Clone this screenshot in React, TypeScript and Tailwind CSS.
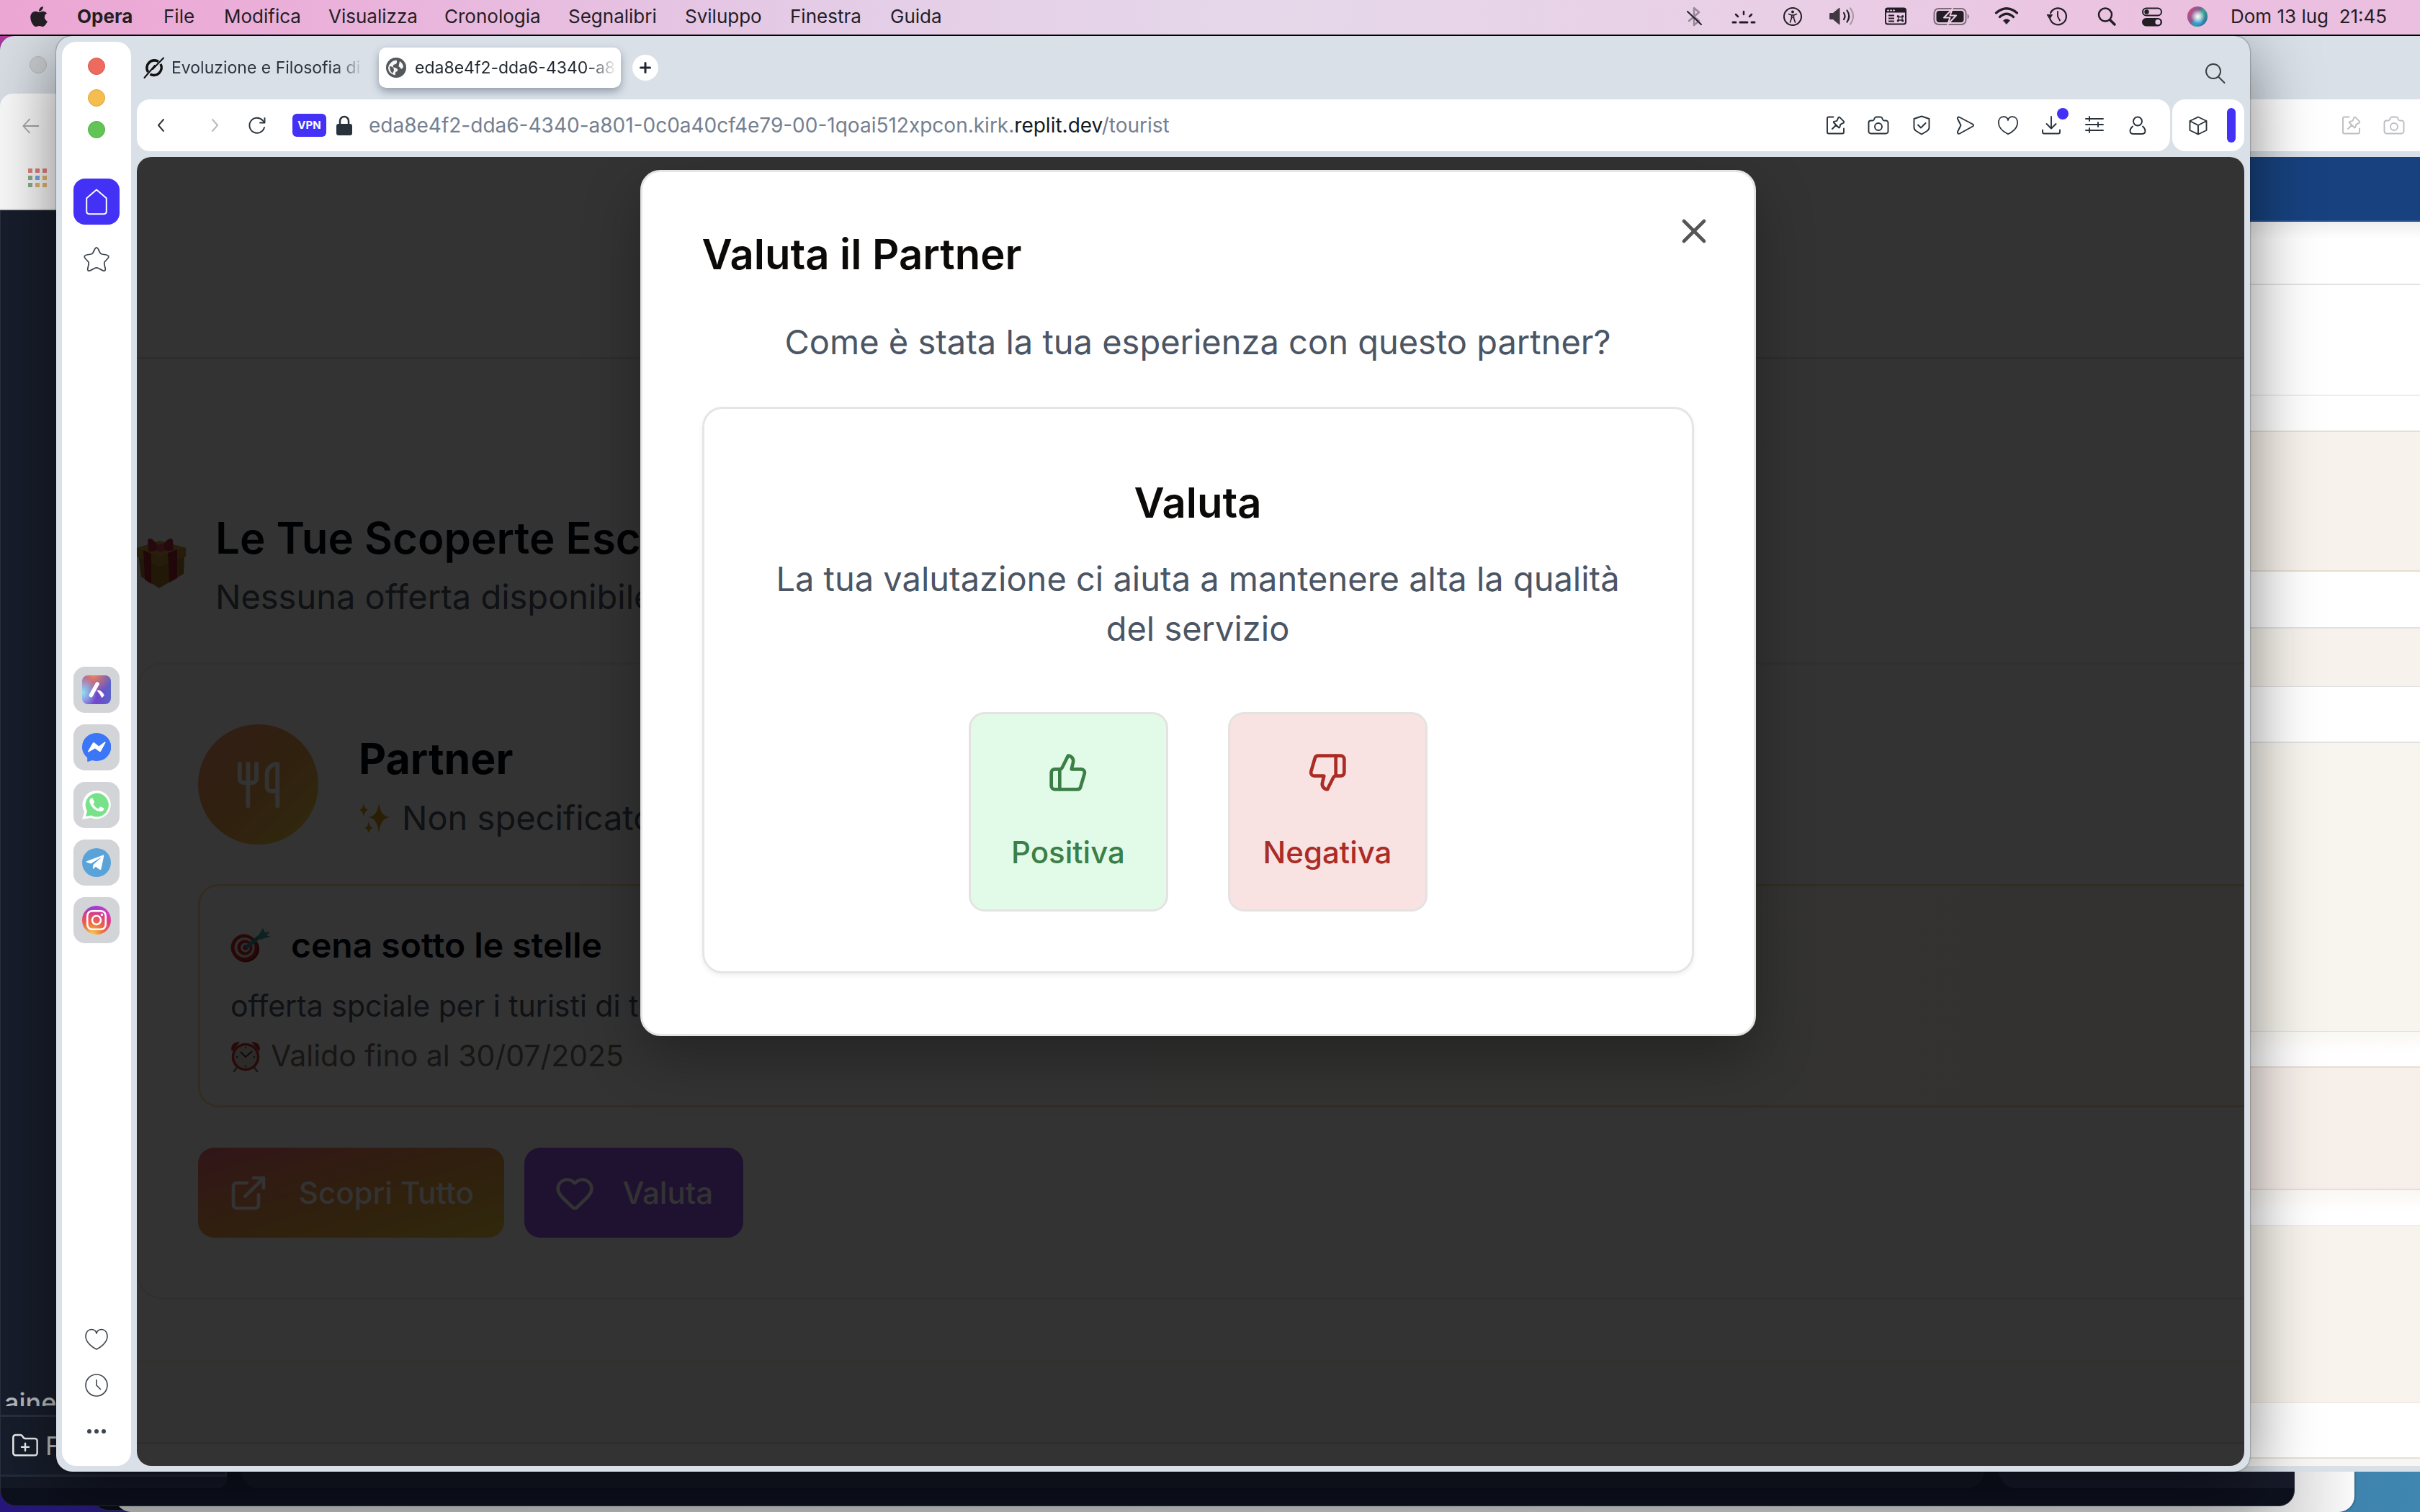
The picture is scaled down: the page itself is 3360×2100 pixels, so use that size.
import type { ReactNode } from "react";
import {
  ExternalLink,
  FolderPlus,
  Heart,
  ThumbsDown,
  ThumbsUp,
  Utensils,
  X,
} from "lucide-react";
import { FaApple, FaInstagram, FaTelegramPlane } from "react-icons/fa";

/* ---------- Menu bar ---------- */

function MenuIcon({ label, width, children }: { label: string; width: number; children: ReactNode }) {
  return (
    <button aria-label={label} className="flex shrink-0 items-center justify-center">
      <svg width={width} height="32" viewBox={`0 0 ${width} 32`} fill="none" stroke="currentColor" strokeLinecap="round" strokeLinejoin="round">
        {children}
      </svg>
    </button>
  );
}

function StatusIcons() {
  return (
    <div className="grid grid-cols-[66px_69px_68px_70px_77px_79px_73px_70px_65px_62px] justify-items-center text-[#231d24]">
      <MenuIcon label="Bluetooth" width={32}>
        <path d="M8 22 22 10 15 4v24l7-6-6-5" strokeWidth="2.5" opacity="0.4" />
        <path d="M6 9l19 18" strokeWidth="2" />
      </MenuIcon>
      <MenuIcon label="Retroilluminazione tastiera" width={36}>
        <path d="M3 24h4M13 24h10M29 24h4" strokeWidth="3" />
        <path d="M18 9v4M7 13l3 3M29 13l-3 3" strokeWidth="2.5" />
      </MenuIcon>
      <MenuIcon label="Accessibilità" width={32}>
        <circle cx="16" cy="16" r="12" strokeWidth="2" />
        <circle cx="16" cy="9.500" r="2" fill="currentColor" stroke="none" />
        <path d="M10.500 12.500 14.500 14v4l-2 6M21.500 12.500 17.500 14v4l2 6M14.500 14h3M14.500 17h3" strokeWidth="1.6" />
      </MenuIcon>
      <MenuIcon label="Volume" width={38}>
        <path d="M2 11.500h4l9-7.500v23l-9-7.500H2z" fill="currentColor" strokeWidth="1" opacity="0.85" />
        <path d="M21 11q3 4.500 0 9" strokeWidth="2.200" />
        <path d="M25.500 7.500q5.500 8 0 16" strokeWidth="2.200" />
        <path d="M30 4.500q8 11 0 22" strokeWidth="2.200" opacity="0.3" />
      </MenuIcon>
      <MenuIcon label="Comandi rapidi" width={32}>
        <rect x="2" y="4.500" width="28" height="22" rx="3" strokeWidth="2" />
        <rect x="2" y="4.500" width="28" height="6" fill="currentColor" stroke="none" />
        <path d="M5 7.500h1M9 7.500h1M13 7.500h1" stroke="#e9cde5" strokeWidth="2" />
        <path d="M6 14.500h8M6 18.500h8M6 22.500h8" strokeWidth="2" strokeLinecap="butt" />
        <path d="M20 16.500h5v4.500h-5zM20 16.500h-1.500V15H20zM25 16.500V15h1.500v1.500zM20 21v1.500h-1.500V21zM25 21h1.500v1.500H25z" strokeWidth="1.3" />
      </MenuIcon>
      <MenuIcon label="Batteria in carica" width={54}>
        <rect x="2.500" y="5" width="44" height="22" rx="6" strokeWidth="2" opacity="0.55" />
        <path d="M49 13v6q3-3 0-6z" fill="currentColor" strokeWidth="0.5" opacity="0.55" />
        <rect x="5.500" y="8" width="38" height="16" rx="4" fill="currentColor" stroke="none" />
        <path d="M28 5 16 17.500h8.500L21 27l12-12.500h-8.500z" fill="currentColor" stroke="#ecd0e6" strokeWidth="2" />
      </MenuIcon>
      <MenuIcon label="Wi-Fi" width={34}>
        <path d="M2.500 11q14.500-12.500 29 0" strokeWidth="3.200" />
        <path d="M7.500 16.500q9.500-8.500 19 0" strokeWidth="3.200" />
        <path d="M12.500 21.500q4.500-4 9 0L17 26.500z" fill="currentColor" strokeWidth="0.5" />
      </MenuIcon>
      <MenuIcon label="Time Machine" width={32}>
        <path d="M5.500 19.500A11.500 11.500 0 1 0 6 11" strokeWidth="2.200" />
        <path d="M1.500 13.500h7L5 19z" fill="currentColor" strokeWidth="1" />
        <path d="M16 9v7l3 5.500" strokeWidth="1.800" />
      </MenuIcon>
      <MenuIcon label="Spotlight" width={32}>
        <circle cx="14" cy="13.500" r="9" strokeWidth="2.500" />
        <path d="M20.500 20.500 27 27" strokeWidth="3.500" />
      </MenuIcon>
      <MenuIcon label="Centro di Controllo" width={32}>
        <rect x="3" y="4.500" width="26" height="10" rx="5" strokeWidth="2" />
        <circle cx="8.500" cy="9.500" r="3.200" fill="currentColor" stroke="none" />
        <rect x="2" y="18" width="28" height="11.500" rx="5.700" fill="currentColor" stroke="none" />
        <circle cx="24" cy="23.700" r="3.600" fill="#ebc9e3" stroke="none" />
      </MenuIcon>
    </div>
  );
}

function SiriIcon() {
  return (
    <svg width="28" height="28" viewBox="0 0 28 28" aria-label="Siri">
      <defs>
        <radialGradient id="siriCore" cx="0.5" cy="0.5" r="0.5">
          <stop offset="0" stopColor="#ffffff" />
          <stop offset="0.45" stopColor="#ffffff" stopOpacity="0.6" />
          <stop offset="1" stopColor="#ffffff" stopOpacity="0" />
        </radialGradient>
        <linearGradient id="siriRim" x1="0" y1="0.2" x2="1" y2="0.8">
          <stop offset="0" stopColor="#d6457f" />
          <stop offset="0.4" stopColor="#7f5f93" />
          <stop offset="0.6" stopColor="#38a58c" />
          <stop offset="1" stopColor="#3463a8" />
        </linearGradient>
      </defs>
      <circle cx="14" cy="14" r="14" fill="url(#siriRim)" />
      <path d="M6 23q8 6 16-1l-8-6z" fill="#2f9bd6" />
      <circle cx="14.500" cy="14" r="10" fill="url(#siriCore)" />
    </svg>
  );
}

const menus = ["File", "Modifica", "Visualizza", "Cronologia", "Segnalibri", "Sviluppo", "Finestra", "Guida"];

function MenuBar() {
  return (
    <header className="z-10 flex h-[50px] shrink-0 items-center justify-between border-b-2 border-black bg-[linear-gradient(to_right,#eca6d3,#eab2db_15%,#e4cbe6_33%,#e6d8ea_52%,#e9cfe6_74%,#ebbfdf_92%)] px-[38px] pb-0.5 text-[26px] leading-8 text-[#231d24]">
      <nav className="grid grid-cols-[69px_120px_84px_145px_161px_172px_162px_146px_139px_80px] items-center text-left whitespace-nowrap">
        <button aria-label="Apple"><FaApple className="size-8" /></button>
        <button className="text-left font-bold">Opera</button>
        {menus.map((m) => (
          <button key={m} className="text-left">{m}</button>
        ))}
      </nav>
      <div className="flex items-center whitespace-nowrap">
        <StatusIcons />
        <div className="flex items-center gap-8 pl-[18px]">
          <SiriIcon />
          <span className="w-[225px]">Dom 13 lug&nbsp; 21:45</span>
        </div>
      </div>
    </header>
  );
}

/* ---------- Browser line icons, 32px grid ---------- */

const glyphs = {
  back: <path d="M19 8l-7 8 7 8" />,
  forward: <path d="M13 8l7 8-7 8" />,
  reload: (
    <>
      <path d="M26 19A10.500 10.500 0 1 1 23.500 9l2.500 3" />
      <path d="M26.500 6v6.500H20" />
    </>
  ),
  pin: (
    <>
      <path d="M13.500 4.500H7a2 2 0 0 0-2 2v19a2 2 0 0 0 2 2h19a2 2 0 0 0 2-2v-5" />
      <path d="M22.500 5.200 28 10.700q.8 1-.4 2l-4.300 2.100-1 4q-.6 1.200-1.600.2l-6.500-6.500q-1-1 .2-1.600l4-1 2-4.500q1-1.200 2.100-.2zM17 16l-5 5" />
    </>
  ),
  camera: (
    <>
      <path d="M2.500 12.500a3 3 0 0 1 3-3h2.500q1.500 0 2-1.500l.6-1.600Q11.300 4.500 13 4.500h6q1.700 0 2.400 1.900L22 8q.5 1.500 2 1.500h2.500a3 3 0 0 1 3 3v12a3 3 0 0 1-3 3h-21a3 3 0 0 1-3-3z" />
      <circle cx="16" cy="18" r="5" />
    </>
  ),
  shield: (
    <>
      <path d="M16 3.500 26.500 7v12q0 3-3 5L16 28.500 8.500 24q-3-2-3-5V7z" />
      <path d="M11 15.500l4 4 6.500-6.500" />
    </>
  ),
  send: <path d="M6 5.500q1-1.500 3-.5l18 9.500q2 1.500 0 3L9 27.500q-2 1-3-1-.3-.7 0-1.500l4.500-9L6 7q-.5-.8 0-1.500z" />,
  heart: <path d="M16 30C12 28 1 21.500 1 12 1 6 4.500 2.500 9 2.500c3.800 0 6.300 2 7 5.500.7-3.500 3.200-5.500 7-5.500 4.500 0 8 3.500 8 9.500C31 21.500 20 28 16 30z" />,
  download: (
    <>
      <path d="M16 4v16M9.500 14l6.500 6.500 6.500-6.500" />
      <path d="M4 22.500v3a2 2 0 0 0 2 2h20a2 2 0 0 0 2-2v-3" />
    </>
  ),
  sliders: <path d="M4 7h24M4 15h24M4 23h24M9 4v6M21 12v6M9 20v6" />,
  person: (
    <>
      <circle cx="16" cy="10.500" r="6" />
      <path d="M9 17.500q-3.500 3-3.500 6.500 0 4 5 4h11q5 0 5-4 0-3.500-3.500-6.500" />
    </>
  ),
  cube: <path d="M16 4.500 27.500 10v13L16 28.500 4.500 23V10zM4.500 10 16 16l11.500-6M16 16v12.500" />,
  search: (
    <>
      <circle cx="13" cy="13" r="10" />
      <path d="M20 20.500 28.500 29" />
    </>
  ),
  home: <path d="M6 12.500 16 4l10 8.500V26q0 2.500-2.500 2.500h-15Q6 28.500 6 26z" />,
  star: <path d="M16 3q1.200 0 2 2l2 4q.6 1 2 1.400l5 .8q4 1 1.500 4L25 19q-.8 1 0 4l.8 3.500q.5 3.500-3 2L18 26q-2-1-4 0l-4.800 2.500q-3.500 1.500-3-2L7 23q.8-3 0-4l-3.500-3.800q-2.500-3 1.500-4l5-.8q1.400-.4 2-1.400l2-4q.8-2 2-2z" />,
  clock: (
    <>
      <circle cx="16" cy="16" r="15" />
      <path d="M16 8.500V16l5.500 5.500" />
    </>
  ),
  arrowLeft: <path d="M27 16H5M14 6 4.500 16 14 26" />,
};

function Glyph({ name, className }: { name: keyof typeof glyphs; className?: string }) {
  return (
    <svg viewBox="0 0 32 32" fill="none" stroke="currentColor" strokeWidth="1.900" strokeLinecap="round" strokeLinejoin="round" className={className ?? "size-8"}>
      {glyphs[name]}
    </svg>
  );
}

function GlyphButton({ name, label, className, icon }: { name: keyof typeof glyphs; label: string; className?: string; icon?: string }) {
  return (
    <button aria-label={label} className={className}>
      <Glyph name={name} className={icon} />
    </button>
  );
}

/* ---------- Opera sidebar ---------- */

function AppTile({ label, children }: { label: string; children: ReactNode }) {
  return (
    <button aria-label={label} className="flex size-16 items-center justify-center rounded-2xl bg-[#d3d4d8] text-white">
      {children}
    </button>
  );
}

function Sidebar() {
  return (
    <aside className="flex w-24 shrink-0 flex-col items-center rounded-[20px] bg-white text-[#3d454d]">
      <div className="flex flex-col gap-5 pt-[22px]">
        <button aria-label="Chiudi" className="size-6 rounded-full border border-[#d9584d] bg-[#ec6a5e]" />
        <button aria-label="Riduci" className="size-6 rounded-full border border-[#dba63f] bg-[#f4bd4f]" />
        <button aria-label="Ingrandisci" className="size-6 rounded-full border border-[#51ae45] bg-[#61c454]" />
      </div>
      <button aria-label="Home" className="mt-14 flex size-16 items-center justify-center rounded-2xl bg-[#4331f5] text-white">
        <Glyph name="home" className="size-11 stroke-[1.4]" />
      </button>
      <button aria-label="Preferiti" className="mt-7">
        <Glyph name="star" className="size-10 stroke-[1.4]" />
      </button>
      <div className="mt-[546px] flex flex-col gap-4">
        <AppTile label="Aria">
          <span className="flex size-10 items-center justify-center rounded-lg bg-[radial-gradient(circle_at_0%_60%,#8fe6ee,transparent_45%),radial-gradient(circle_at_40%_0%,#ec8456,transparent_55%),linear-gradient(to_right,#8f5fe0,#6f47cc_50%,#5a63c8)]">
            <svg viewBox="0 0 40 40" className="size-10" fill="none" stroke="white" strokeWidth="5.500" strokeLinecap="round">
              <path d="M21 12 12.500 27.500" />
              <path d="M21.500 20.500q7 1 9 7.500l-3 3q-3-6-6-9z" fill="white" strokeWidth="0.500" />
            </svg>
          </span>
        </AppTile>
        <AppTile label="Messenger">
          <svg viewBox="0 0 40 40" className="size-10">
            <path d="M20 0a20 19.500 0 1 1-6 38l-6 2q-.8 0-.8-1v-4.500A20 19.500 0 0 1 20 0z" fill="#3a76f6" />
            <path d="M8 25.500 15 13.500q1-1 2.200 0l6 5 8-6q1.500-.8 1.300 1L26 25.500q-1.200 1.200-2.500 0L18 21.500 9 26.500q-1.500.3-1-1z" fill="white" />
          </svg>
        </AppTile>
        <AppTile label="WhatsApp">
          <svg viewBox="0 0 40 40" className="size-10">
            <path d="M20.500 0A19.700 19.700 0 1 1 12 37.700L0 40l3.200-10.500A19.700 19.700 0 0 1 20.500 0z" fill="white" />
            <path d="M20.500 3.500a16.500 16.500 0 1 1-8 31L5 36l2-7.500A16.500 16.500 0 0 1 20.500 3.500z" fill="#78e28a" />
            <path d="M10.500 13q1.500-3.500 4-2.500l2.500 5q.3 1.300-1.500 3.500 2.500 4.500 7 6.500l2.500-2.700q.8-.6 1.800 0l3.700 2q-.5 4.500-5.500 4.200-11-1.500-14.500-12.500-.3-2 0-3.500z" fill="white" />
          </svg>
        </AppTile>
        <AppTile label="Telegram">
          <span className="flex size-10 items-center justify-center rounded-full bg-[#5aa3d9]">
            <FaTelegramPlane className="mr-1 size-7" />
          </span>
        </AppTile>
        <AppTile label="Instagram">
          <span className="flex size-10 items-center justify-center rounded-full bg-[radial-gradient(circle_at_35%_100%,#f8cf4d_0%,#f0703f_32%,#e0407a_60%,transparent_80%),linear-gradient(to_right,#6a3df0,#d63fc0)]">
            <FaInstagram className="size-8" />
          </span>
        </AppTile>
      </div>
      <div className="mt-auto flex flex-col items-center gap-8 pb-8">
        <GlyphButton name="heart" label="Segnalibri" icon="size-8 stroke-[1.6]" />
        <GlyphButton name="clock" label="Cronologia" icon="size-8 stroke-[1.6]" />
        <button aria-label="Altro" className="flex h-8 items-center gap-1">
          <span className="size-1.5 rounded-full bg-[#3d454d]" />
          <span className="size-1.5 rounded-full bg-[#3d454d]" />
          <span className="size-1.5 rounded-full bg-[#3d454d]" />
        </button>
      </div>
    </aside>
  );
}

/* ---------- Tabs and address bar ---------- */

function TabStrip() {
  return (
    <div className="flex h-20 shrink-0 items-center pb-2 text-[23px] leading-8 whitespace-nowrap text-[#2b343d]">
      <button className="flex w-[318px] items-center gap-2 pl-2">
        <svg viewBox="0 0 32 32" className="size-8 shrink-0" fill="none" stroke="#111" strokeLinecap="round">
          <path d="M22 7.500A10.500 10.500 0 0 0 7.500 22M25 11a10.500 10.500 0 0 1-14.500 14" strokeWidth="3.600" strokeLinecap="butt" />
          <path d="M29 2.500 14 18M2.500 30 17 13" strokeWidth="2" />
        </svg>
        <span className="bg-[linear-gradient(to_right,#2b343d_88%,#c3cad1)] bg-clip-text text-transparent">Evoluzione e Filosofia di</span>
      </button>
      <button className="ml-[18px] flex h-14 w-[336px] items-center gap-3 rounded-[10px] bg-white pl-[10px] shadow-[0_5px_12px_rgba(60,70,90,0.45)]">
        <svg viewBox="0 0 28 28" className="size-7 shrink-0">
          <circle cx="14" cy="14" r="14" fill="#55585b" />
          <path d="M13 3.500q2.500 4-1 6-4 1.500-2 4.500 3.500 0 6 1.500 2 3-2 4.500v4.500q-9.500-1-11-9Q4 5.500 13 3.500z" fill="#fff" opacity="0.95" transform="rotate(8 14 14)" />
          <path d="M19 5q4.500 3 5 8l-2.500 3-4-4z" fill="#fff" opacity="0.95" />
          <path d="M5 12q6 0 6 6l-2 4q-4-4-4-10z" fill="#55585b" />
        </svg>
        <span className="bg-[linear-gradient(to_right,#20272e_86%,#f1f1f1)] bg-clip-text text-transparent">eda8e4f2-dda6-4340-a8</span>
      </button>
      <button aria-label="Nuova scheda" className="ml-4 flex size-9 items-center justify-center rounded-full bg-white">
        <svg viewBox="0 0 16 16" className="size-4" stroke="#20272e" strokeWidth="3" strokeLinecap="round"><path d="M8 1.500v13M1.500 8h13" /></svg>
      </button>
      <button aria-label="Cerca schede" className="mt-4 mr-6 ml-auto text-[#3a3d40]"><Glyph name="search" /></button>
    </div>
  );
}

function AddressBar() {
  return (
    <div className="flex h-[72px] shrink-0 gap-[3px] text-[#28323b]">
      <div className="flex min-w-0 flex-1 items-center rounded-[18px] bg-white pr-[29px] pl-[18px]">
        <GlyphButton name="back" label="Indietro" />
        <GlyphButton name="forward" label="Avanti" className="ml-[42px] text-[#b5b9bd]" />
        <GlyphButton name="reload" label="Ricarica" className="ml-[27px]" />
        <button className="ml-[33px] flex h-8 w-[47px] items-center justify-center rounded-[6px] bg-[#4331f5] text-[15px] font-bold text-white">VPN</button>
        <svg viewBox="0 0 24 28" className="ml-[13px] h-7 w-6" aria-label="Connessione protetta">
          <rect x="1" y="12" width="22" height="16" rx="3" fill="#28323b" />
          <path d="M6 13V8a6 6 0 0 1 12 0v5" fill="none" stroke="#28323b" strokeWidth="2.500" />
        </svg>
        <a href="#tourist" className="ml-[22px] text-[28px] leading-9 whitespace-nowrap text-[#74808f]">
          eda8e4f2-dda6-4340-a801-0c0a40cf4e79-00-1qoai512xpcon.kirk.<span className="text-[#15191d]">replit.dev</span>/tourist
        </a>
        <div className="ml-auto flex gap-7">
          <GlyphButton name="pin" label="Fissa" />
          <GlyphButton name="camera" label="Istantanea" />
          <GlyphButton name="shield" label="Protezione" />
          <GlyphButton name="send" label="Invia" />
          <GlyphButton name="heart" label="Aggiungi ai segnalibri" icon="m-0.5 size-7 stroke-2" />
          <div className="relative size-8">
            <GlyphButton name="download" label="Download" />
            <span className="absolute -top-2 -right-2 size-4 rounded-full bg-[#4331f5]" />
          </div>
          <GlyphButton name="sliders" label="Configurazione" />
          <GlyphButton name="person" label="Profilo" />
        </div>
      </div>
      <div className="flex w-[100px] shrink-0 items-center justify-between rounded-[18px] bg-white pr-3 pl-5">
        <GlyphButton name="cube" label="Estensioni" />
        <span className="h-12 w-3 rounded-full bg-[#4331f5]" />
      </div>
    </div>
  );
}

/* ---------- Emoji drawings ---------- */

function GiftEmoji() {
  return (
    <svg viewBox="0 0 68 70" className="h-[70px] w-[68px] shrink-0">
      <path d="M2 22 31 34v36L6 54zM66 22 31 34v36l34-20z" fill="#a87a2c" />
      <path d="M0 14 32 4l36 10v12L31 40 0 26z" fill="#b98a35" />
      <path d="M0 14 32 26l36-12-34-9z" fill="#c99a44" />
      <path d="M9 17l11 5v42L11 58zM43 21l13-5v40l-11 6z" fill="#a32432" />
      <path d="M32 15Q20-4 15 3l1 16q8 1 16-4zM32 15Q45-4 50 3l1 14q-10 3-19-2z" fill="#b83244" />
      <circle cx="33" cy="14" r="5.500" fill="#d04555" />
    </svg>
  );
}

function SparklesEmoji() {
  return (
    <svg viewBox="0 0 44 44" className="size-11 shrink-0" fill="#cf9a1c">
      <path d="M28 1q2 19 16 20-14 1-16 22-2-21-15-22 13-1 15-20z" />
      <path d="M7 1q1 9 6 10-5 1-6 10-1-9-6-10 5-1 6-10zM14 26q1 9 6 10-5 1-6 8-1-7-6-8 5-1 6-10z" />
    </svg>
  );
}

function TargetEmoji() {
  return (
    <svg viewBox="0 0 56 48" className="h-12 w-14 shrink-0">
      <ellipse cx="21" cy="29" rx="19" ry="18.500" fill="#8f1d1d" />
      <circle cx="19" cy="27" r="18.500" fill="#c22a26" />
      <circle cx="19.500" cy="27" r="14" fill="#dedede" />
      <circle cx="20" cy="27" r="10.500" fill="#c22a26" />
      <circle cx="20.500" cy="27" r="6.500" fill="#dedede" />
      <circle cx="21" cy="27" r="3.500" fill="#c22a26" />
      <path d="M23 26 40 12" stroke="#3d8f9c" strokeWidth="5" strokeLinecap="round" />
      <path d="M37 13 45 0l3 6 7-1-5 5 6 2-15 4z" fill="#4ba3b0" />
    </svg>
  );
}

function AlarmEmoji() {
  return (
    <svg viewBox="0 0 42 44" className="h-11 w-[42px] shrink-0">
      <path d="M10 36 5 43M32 36l5 7" stroke="#7d7d7d" strokeWidth="3" strokeLinecap="round" />
      <path d="M1 13Q1 2 13 2L3 15zM41 13Q41 2 29 2l10 13z" fill="#c8302c" />
      <circle cx="21" cy="23" r="17.500" fill="#d9d4d2" stroke="#c03430" strokeWidth="3.500" />
      <path d="M14 16l7 7 9-8M21 9v2M21 35v2M8 23h2M32 23h2" stroke="#333" strokeWidth="1.800" fill="none" />
    </svg>
  );
}

/* ---------- Tourist page under the dialog ---------- */

function TouristPage() {
  return (
    <div className="flex h-full flex-col bg-white">
      <div className="h-[281px] shrink-0 border-b-[3px] border-[#e6e6e6]" />
      <div className="h-[115px] shrink-0 border-b-2 border-[#fafafa]" />
      <section className="shrink-0 border-b-[3px] border-[#f7f3e6] pb-[84px]">
        <header className="flex items-start gap-[41px] pt-[91px]">
          <span className="mt-[42px] flex"><GiftEmoji /></span>
          <div className="whitespace-nowrap">
            <h2 className="text-[60px] leading-[84px] font-semibold text-[#030712]">Le Tue Scoperte Esclusive</h2>
            <p className="text-[47px] leading-[80px] text-[#4b5563]">Nessuna offerta disponibile</p>
          </div>
        </header>
        <article className="mt-[51px] -mr-10 rounded-[36px] border-[3px] border-[#f6efe6] px-[82px] py-[83px]">
          <div className="flex items-start gap-14">
            <div className="flex size-[167px] shrink-0 items-center justify-center rounded-full bg-linear-to-br from-[#f59673] via-[#f0a04b] to-[#f0d246] text-white">
              <Utensils className="size-[70px]" strokeWidth={2} />
            </div>
            <div className="pt-1.5 whitespace-nowrap">
              <h3 className="text-[59px] leading-[84px] font-bold text-[#030712]">Partner</h3>
              <p className="flex items-center gap-4 text-[47px] leading-[80px] text-[#4b5563]">
                <SparklesEmoji />
                Non specificato
              </p>
            </div>
          </div>
          <div className="mt-[52px] -mr-[120px] rounded-[28px] border-[3px] border-[#fedba8] bg-[linear-gradient(to_right,#ffffff_30%,#fffaf0)] px-[42px] pt-10 pb-[34px]">
            <h4 className="flex items-center gap-7 text-[48px] leading-[84px] font-semibold text-[#030712]">
              <TargetEmoji />
              cena sotto le stelle
            </h4>
            <p className="mt-2 text-[41px] leading-[69px] text-[#4b5563]">offerta spciale per i turisti di tutto il mondo</p>
            <p className="flex items-center gap-[14px] text-[41px] leading-[69px] text-[#78716c]">
              <AlarmEmoji />
              Valido fino al 30/07/2025
            </p>
          </div>
          <div className="mt-[56px] flex gap-7 text-[42px] leading-[56px] font-medium text-white">
            <button className="flex h-[125px] w-[425px] items-center justify-between rounded-[22px] bg-linear-to-br from-[#f56b78] via-[#f09a46] to-[#f0c83c] px-[42px]">
              <ExternalLink className="size-14" strokeWidth={2} />
              Scopri Tutto
            </button>
            <button className="flex h-[125px] w-[304px] items-center justify-between rounded-[22px] bg-[#9b5af0] px-[42px]">
              <Heart className="size-14" strokeWidth={2} />
              Valuta
            </button>
          </div>
        </article>
      </section>
      <div className="h-[114px] shrink-0 border-b-[3px] border-[#e6e6e6] bg-[#fcfafa]" />
    </div>
  );
}

/* ---------- Rating dialog ---------- */

function RatingDialog() {
  return (
    <div role="dialog" aria-labelledby="dialog-title" className="relative w-[1549px] rounded-[28px] border-[3px] border-[#e5e5e3] bg-white px-[83px] pt-20 pb-[84px] text-center shadow-[0_30px_80px_rgba(0,0,0,0.3)]">
      <button aria-label="Chiudi" className="absolute top-[54px] right-[55px] text-[#555555]">
        <X className="size-14" strokeWidth={2} />
      </button>
      <h2 id="dialog-title" className="text-left text-[58px] leading-[68px] font-semibold text-[#0c0a09]">Valuta il Partner</h2>
      <p className="mt-[53px] text-[47px] leading-[69px] text-[#4b5563]">Come è stata la tua esperienza con questo partner?</p>
      <div className="mt-[56px] rounded-[28px] border-[3px] border-[#e5e5e5] px-[83px] pt-[88px] pb-[83px] shadow-[0_3px_7px_rgba(0,0,0,0.06)]">
        <h3 className="text-[58px] leading-[84px] font-semibold text-[#0c0a09]">Valuta</h3>
        <p className="mt-[29px] text-[47px] leading-[69px] text-[#4b5563]">La tua valutazione ci aiuta a mantenere alta la qualità del servizio</p>
        <div className="mt-[82px] flex justify-center gap-[83px] text-[42px] leading-[56px] font-medium">
          <button className="flex size-[277px] flex-col items-center rounded-[22px] border-[3px] border-[#e5e3e1] bg-[#e2fbe8] pt-[53px] text-[#3b7f46]">
            <ThumbsUp className="size-14" strokeWidth={2} />
            <span className="mt-[55px]">Positiva</span>
          </button>
          <button className="flex size-[277px] flex-col items-center rounded-[22px] border-[3px] border-[#e5e3e1] bg-[#f8e3e2] pt-[53px] text-[#ab2c26]">
            <ThumbsDown className="size-14" strokeWidth={2} />
            <span className="mt-[55px]">Negativa</span>
          </button>
        </div>
      </div>
    </div>
  );
}

/* ---------- Windows on the desktop ---------- */

const appDots = [
  "bg-[#e08078]", "bg-[#e08078]", "bg-[#e08078]",
  "bg-[#86b08a]", "bg-[#7aa7e0]", "bg-[#e0b56e]",
  "bg-[#86b08a]", "bg-[#e0b56e]", "bg-[#e0b56e]",
];

function ChromeWindow() {
  return (
    <section className="absolute top-0 left-0 w-[400px] rounded-tl-[20px] bg-[#d7dde3]">
      <div className="flex h-20 items-center pl-[41px]">
        <span className="size-6 rounded-full border border-[#b3b6ba] bg-[#c9cccf]" />
      </div>
      <div className="flex h-[162px] flex-col gap-11 rounded-tl-[18px] border-b-2 border-[#cfcfcf] bg-[#f8f8f8] pt-[30px] pl-7 text-[#a3a3a3]">
        <Glyph name="arrowLeft" className="size-[30px]" />
        <div className="ml-[11px] grid w-[26px] grid-cols-3 gap-1">
          {appDots.map((c, i) => (
            <span key={i} className={`size-1.5 ${c}`} />
          ))}
        </div>
      </div>
    </section>
  );
}

function CodeWindow() {
  return (
    <section className="absolute top-[200px] right-[174px] bottom-2 left-0 flex flex-col justify-end overflow-hidden rounded-b-[22px] border border-[#2a2f3d] bg-[#0d111e] text-[#b9bdbf]">
      <div className="flex min-h-0 flex-1 gap-5">
        <div className="flex w-[314px] flex-col justify-end rounded-br-[12px] bg-[#141926] pb-4">
          <div className="flex flex-1 flex-col justify-end border-r-[3px] border-b-[3px] border-[#252b3b] bg-[#171d2b]">
            <p className="h-[25px] overflow-hidden pl-[5px] text-[36px] leading-10 font-medium">aine</p>
            <div className="mt-3 flex h-[83px] items-center gap-2 border-t-[3px] border-[#2a3040] pl-3.5 text-[36px] leading-10">
              <FolderPlus className="size-10 shrink-0 text-[#eef1f2]" strokeWidth={1.5} />
              File
            </div>
          </div>
        </div>
        <div className="flex-1 rounded-b-[24px] bg-[#131724]" />
        <div className="w-[410px] rounded-bl-[24px] bg-[#171b29]" />
      </div>
      <div className="h-6 shrink-0" />
    </section>
  );
}

function BackOperaWindow() {
  return (
    <section className="absolute top-0 right-0 bottom-14 flex w-[900px] flex-col overflow-hidden bg-[#d9e0e8] pb-2">
      <div className="h-[88px] shrink-0" />
      <div className="flex h-[72px] shrink-0 items-center justify-end gap-7 bg-white pr-5 text-[#bcbec1]">
        <Glyph name="pin" />
        <Glyph name="camera" />
      </div>
      <div className="mt-2 h-[90px] shrink-0 border-b-2 border-[#2b5390] bg-[#17427f]" />
      <div className="flex min-h-0 flex-1 flex-col bg-white">
        <div className="h-[88px] shrink-0 border-b-2 border-[#e2e2e2] bg-[linear-gradient(to_bottom,#efefef,#ffffff_24px)]" />
        <div className="h-[154px] shrink-0 border-b-2 border-[#efefef]" />
        <div className="h-[48px] shrink-0" />
        <div className="h-[196px] shrink-0 border-y-2 border-[#e8ded2] bg-[#f7f2eb]" />
        <div className="h-[77px] shrink-0" />
        <div className="h-[83px] shrink-0 border-t-2 border-b border-[#e2e2e4] bg-[#f7f3ec]" />
        <div className="h-[76px] shrink-0" />
        <div className="h-[403px] shrink-0 border-t-2 border-b border-[#e2e2e4] bg-[#f8f5ee]" />
        <div className="h-[48px] shrink-0 bg-[linear-gradient(to_bottom,#faf8f4,#ffffff_30px)]" />
        <div className="h-[172px] shrink-0 border-y-2 border-[#eaddd3] bg-[#f7efea]" />
        <div className="h-[49px] shrink-0 bg-[linear-gradient(to_bottom,#faf8f4,#ffffff_30px)]" />
        <div className="h-[246px] shrink-0 border-y border-[#e8ded2] bg-[#f8f4ed]" />
        <div className="h-[76px] shrink-0" />
        <div className="flex-1 border-t-2 border-[#e4e0dc] bg-[#f8f6f2]" />
      </div>
    </section>
  );
}

function OperaWindow() {
  return (
    <section className="absolute top-0 right-[236px] bottom-14 left-[78px] flex gap-2 rounded-[22px] bg-[#d9e0e8] p-2 shadow-[0_0_2px_rgba(0,0,0,0.7),0_24px_90px_rgba(0,0,0,0.5)]">
      <Sidebar />
      <div className="flex min-w-0 flex-1 flex-col">
        <TabStrip />
        <AddressBar />
        <main className="relative mt-2 min-h-0 flex-1 overflow-hidden rounded-[20px]">
          <TouristPage />
          <div className="absolute inset-0 flex items-start justify-center bg-black/80 pt-[18px] pl-5">
            <RatingDialog />
          </div>
        </main>
      </div>
    </section>
  );
}

export default function App() {
  return (
    <div className="flex h-screen flex-col overflow-hidden font-['Inter',sans-serif]">
      <MenuBar />
      <div className="relative min-h-0 flex-1 bg-[linear-gradient(to_bottom,#b23a9f,transparent_80px),linear-gradient(to_right,#27167c,#3f87b0)]">
        <section className="absolute right-[600px] bottom-0.5 left-[128px] h-40 rounded-[22px] border border-[#33363c] bg-[#0a0d14]" />
        <section className="absolute right-[91px] bottom-0 left-[160px] h-80 rounded-[22px] bg-[linear-gradient(to_right,#b8b8b8,#c8c8c8_95%,#fafafa)] shadow-[0_0_3px_rgba(0,0,0,0.8)]" />
        <CodeWindow />
        <ChromeWindow />
        <BackOperaWindow />
        <OperaWindow />
      </div>
    </div>
  );
}
